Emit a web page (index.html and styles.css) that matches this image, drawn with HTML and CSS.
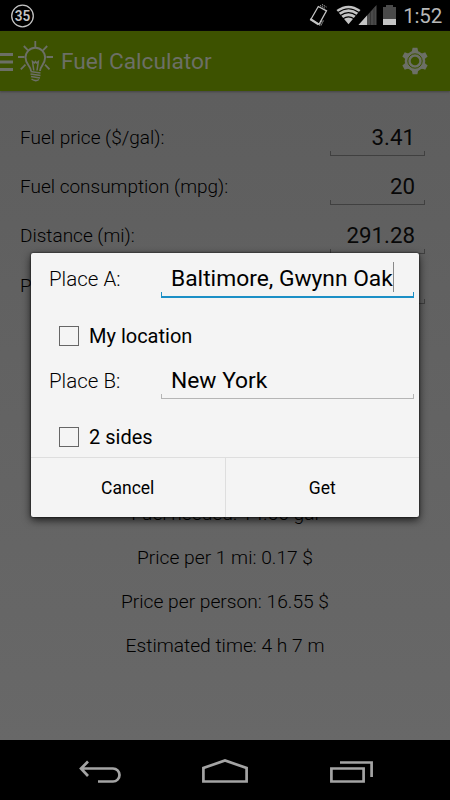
FILE: index.html
```html
<!DOCTYPE html>
<html lang="en">
<head>
<meta charset="utf-8">
<title>Fuel Calculator</title>
<link rel="stylesheet" href="styles.css">
</head>
<body>
<div class="phone">
  <header class="status">
    <svg class="badge" width="24" height="24" viewBox="0 0 24 24"><circle cx="12.500" cy="12" r="10.800" fill="none" stroke="#c4c4c4" stroke-width="1.300"/><text x="12.500" y="17.200" text-anchor="middle" textLength="15.500" lengthAdjust="spacingAndGlyphs" class="badge-text">35</text></svg>
    <svg class="signals" width="90" height="31" viewBox="305 0 90 31">
      <g fill="none" stroke="#c4c4c4" stroke-width="1.300"><path d="M310.800 19.500 318.300 6.500 326.500 10.800 319 24.300Z"/><path d="M310.300 19 318.500 24.400" stroke-width="2.200"/><path d="M320 5.500 325.500 8.500M322 4.500 326.500 7M321 25.500 323.800 20M319.500 25.500 322.500 20" stroke-width=".9" stroke-dasharray="1.300 .8"/></g>
      <path d="M336.500 10Q348.500 1.500 360.500 10L348.500 24.300Z" fill="#c4c4c4"/>
      <g fill="none" stroke="#000" stroke-width="1.200"><path d="M338 12.500Q348.500 5 359 12.500M340.500 15.600Q348.500 9.800 356.500 15.600M343 18.800Q348.500 14.800 354 18.800"/></g>
      <path d="M376.500 5V25H358.500Z" fill="#4a4a4a"/><path d="M367 15.500V25H358.500Z" fill="#c4c4c4"/><path d="M370.500 12V25M374 8V25" stroke="#343434"/>
      <path d="M386 5H393V7H396V25H383V7H386Z" fill="#4a4a4a"/><path d="M383 19H396V25H383Z" fill="#c4c4c4"/>
    </svg>
    <time class="clock">1:52</time>
  </header>

  <section class="app">
    <div class="bar">
      <svg width="56" height="60" viewBox="0 31 56 60" fill="none" stroke="#6c6f66" stroke-width="1.600">
        <path d="M0 54.500H13M0 62H13M0 69.500H13" stroke-width="3"/>
        <path d="M35.300 41V47.500M23.800 46 28 50.300M47.200 46 43 50.300M18 57H24.500M46.500 57H53M20.800 69.300 25.500 64.600M49.500 69.300 45 64.600" stroke-width="1.800"/>
        <path d="M31 71C31 66 25.500 64.500 25.500 57.500A9.800 9.800 0 0 1 45.100 57.500C45.100 64.500 40 66 40 71" stroke-width="1.900"/>
        <path d="M33.800 70.500 32.500 61.500 34.500 63 35.500 61.500 36.500 63 38.300 61.500 37 70.500M30.500 71.500 40.500 73M30.500 74 40.500 75.500M31 76.500 40 78M31.500 79Q35.500 82 39 79.500" stroke-width="1.500"/>
      </svg>
      <h1 class="title">Fuel Calculator</h1>
      <svg class="gear" width="28" height="28" viewBox="-14 -14 28 28"><g fill="#6c6f66"><circle r="10.300"/><path id="tooth" d="M-3.300-9-2.400-13.200H2.400L3.300-9V9L2.400 13.200H-2.400L-3.300 9Z"/><use href="#tooth" transform="rotate(60)"/><use href="#tooth" transform="rotate(120)"/></g><circle r="7.200" fill="#6c6f66" stroke="#3d5200" stroke-width="1"/><circle r="4.300" fill="#3d5200"/></svg>
    </div>
    <div class="form">
      <div class="row"><label>Fuel price ($/gal):</label><div class="field">3.41</div></div>
      <div class="row"><label>Fuel consumption (mpg):</label><div class="field">20</div></div>
      <div class="row"><label>Distance (mi):</label><div class="field">291.28</div></div>
      <div class="row"><label>P</label><div class="field"></div></div>
    </div>
    <div class="results">
      <p>Fuel needed: 14.56 gal</p>
      <p>Price per 1 mi: 0.17 $</p>
      <p>Price per person: 16.55 $</p>
      <p>Estimated time: 4 h 7 m</p>
    </div>
  </section>

  <nav class="nav">
    <svg width="450" height="60" viewBox="0 740 450 60" fill="none" stroke="#a4a4a4" stroke-width="2.700">
      <path d="M88 761.500 81 768.500 88 776M81.500 768.500H113A6.300 6.300 0 0 1 113 781.500H98"/>
      <path d="M203.400 781.500V768L225 760.500 246.600 768V781.500Z"/>
      <path d="M331.400 768.500H363.600V781.500H331.400ZM340 762.500H371.600V777"/>
    </svg>
  </nav>

  <div class="dialog">
    <div class="dialog-body">
      <div class="place"><label>Place A:</label><div class="input focused"><span class="value">Baltimore, Gwynn Oak</span><i class="caret"></i></div></div>
      <div class="check"><span class="box"></span><span>My location</span></div>
      <div class="place second"><label>Place B:</label><div class="input"><span class="value">New York</span></div></div>
      <div class="check"><span class="box"></span><span>2 sides</span></div>
    </div>
    <div class="buttons"><div class="button">Cancel</div><div class="button">Get</div></div>
  </div>
</div>
</body>
</html>
```
FILE: styles.css
```css
* { box-sizing: border-box; }
body { margin: 0; font-family: Roboto, sans-serif; font-size: 19px; color: #000; }
h1, p { margin: 0; }
svg { display: block; flex: none; }
.phone { position: relative; width: 450px; height: 800px; overflow: hidden; display: flex; flex-direction: column; background: #000; }
.status { height: 31px; display: flex; align-items: center; padding: 0 8px 0 10px; }
.badge-text { font-size: 15px; font-weight: 600; fill: #c4c4c4; }
.signals { margin-left: 271px; overflow: visible; }
.clock { margin-left: auto; color: #b8b8b8; font-size: 20.5px; line-height: 31px; padding-top: 2px; letter-spacing: -.2px; }
.app { height: 709px; background: linear-gradient(#5d5d5d, #686868); display: flex; flex-direction: column; }
.bar { height: 60px; background: #3d5200; display: flex; align-items: center; padding-right: 21px; box-shadow: 0 1px 2px #444; }
.title { font-size: 22.7px; font-weight: 400; color: #6c6f66; margin-left: 5px; line-height: 60px; padding-top: 2px; }
.gear { margin-left: auto; }
.form { padding: 24px 25px 0 20px; }
.row { height: 49.2px; display: flex; justify-content: space-between; font-weight: 300; }
.row label { line-height: 46px; }
.field, .input { position: relative; border-bottom: 1px solid #404040; }
.field { width: 95px; height: 41px; text-align: right; padding-right: 10px; font-size: 22.3px; line-height: 44px; font-weight: 400; color: #080808; }
.field::before, .input::before { content: ""; position: absolute; left: 0; right: 0; bottom: 0; height: 4px; border: solid #404040; border-width: 0 1px; }
.results { margin-top: 180.500px; text-align: center; font-weight: 300; font-size: 19.2px; line-height: 44px; }
.nav { height: 60px; }
.dialog { position: absolute; left: 31px; top: 253px; width: 388px; height: 264px; background: #f4f4f4; border-radius: 2px; box-shadow: 0 0 2px #000, 0 3px 8px rgba(0,0,0,.75); display: flex; flex-direction: column; }
.dialog-body { height: 204px; padding: 0 5px 0 18px; font-size: 20px; }
.place { height: 45px; display: flex; justify-content: space-between; }
.place label { font-size: 20.5px; font-weight: 300; line-height: 53px; }
.place.second { height: 40px; }
.place.second label { line-height: 44px; }
.input { width: 253px; display: flex; padding-left: 10px; font-size: 22.8px; line-height: 52px; border-color: #b5b5b5; }
.place.second .input { line-height: 43px; }
.input::before { border-color: #b5b5b5; }
.focused { border-bottom: 2px solid #1b8fc6; }
.focused::before { border-color: #1b8fc6; }
.caret { width: 1px; height: 30px; margin-top: 9px; background: #888; }
.check { height: 47px; margin: 14px 0 0 10px; display: flex; align-items: center; gap: 10px; }
.box { width: 20px; height: 20px; border: 1px solid #666; }
.buttons { height: 60px; display: flex; border-top: 1px solid #dedede; font-size: 17.5px; }
.button { flex: 1; text-align: center; line-height: 61px; }
.button + .button { border-left: 1px solid #dedede; }
```
